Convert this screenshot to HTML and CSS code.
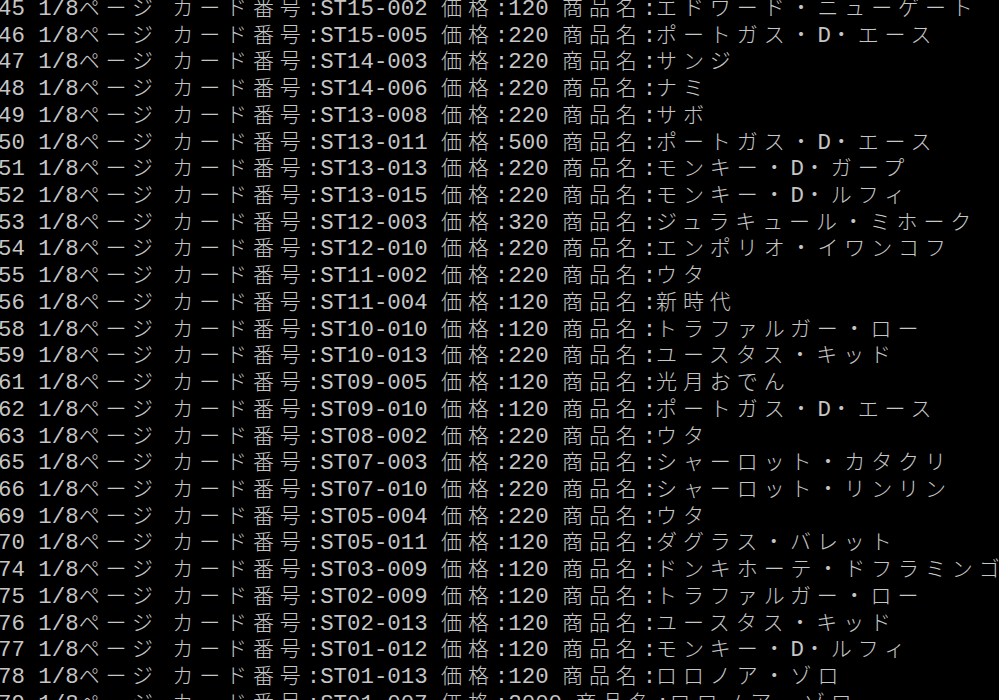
FILE: index.html
```html
<!DOCTYPE html>
<html lang="ja">
<head>
<meta charset="utf-8">
<title>console</title>
<link rel="stylesheet" href="styles.css">
</head>
<body>
<div class="term">
<div class="l">45 1/8<span class="j">ページ</span> <span class="j">カード番号</span>:ST15-002 <span class="j">価格</span>:120 <span class="j">商品名</span>:<span class="j">エドワード・ニューゲート</span></div>
<div class="l">46 1/8<span class="j">ページ</span> <span class="j">カード番号</span>:ST15-005 <span class="j">価格</span>:220 <span class="j">商品名</span>:<span class="j">ポートガス・</span>D<span class="j">・エース</span></div>
<div class="l">47 1/8<span class="j">ページ</span> <span class="j">カード番号</span>:ST14-003 <span class="j">価格</span>:220 <span class="j">商品名</span>:<span class="j">サンジ</span></div>
<div class="l">48 1/8<span class="j">ページ</span> <span class="j">カード番号</span>:ST14-006 <span class="j">価格</span>:220 <span class="j">商品名</span>:<span class="j">ナミ</span></div>
<div class="l">49 1/8<span class="j">ページ</span> <span class="j">カード番号</span>:ST13-008 <span class="j">価格</span>:220 <span class="j">商品名</span>:<span class="j">サボ</span></div>
<div class="l">50 1/8<span class="j">ページ</span> <span class="j">カード番号</span>:ST13-011 <span class="j">価格</span>:500 <span class="j">商品名</span>:<span class="j">ポートガス・</span>D<span class="j">・エース</span></div>
<div class="l">51 1/8<span class="j">ページ</span> <span class="j">カード番号</span>:ST13-013 <span class="j">価格</span>:220 <span class="j">商品名</span>:<span class="j">モンキー・</span>D<span class="j">・ガープ</span></div>
<div class="l">52 1/8<span class="j">ページ</span> <span class="j">カード番号</span>:ST13-015 <span class="j">価格</span>:220 <span class="j">商品名</span>:<span class="j">モンキー・</span>D<span class="j">・ルフィ</span></div>
<div class="l">53 1/8<span class="j">ページ</span> <span class="j">カード番号</span>:ST12-003 <span class="j">価格</span>:320 <span class="j">商品名</span>:<span class="j">ジュラキュール・ミホーク</span></div>
<div class="l">54 1/8<span class="j">ページ</span> <span class="j">カード番号</span>:ST12-010 <span class="j">価格</span>:220 <span class="j">商品名</span>:<span class="j">エンポリオ・イワンコフ</span></div>
<div class="l">55 1/8<span class="j">ページ</span> <span class="j">カード番号</span>:ST11-002 <span class="j">価格</span>:220 <span class="j">商品名</span>:<span class="j">ウタ</span></div>
<div class="l">56 1/8<span class="j">ページ</span> <span class="j">カード番号</span>:ST11-004 <span class="j">価格</span>:120 <span class="j">商品名</span>:<span class="j">新時代</span></div>
<div class="l">58 1/8<span class="j">ページ</span> <span class="j">カード番号</span>:ST10-010 <span class="j">価格</span>:120 <span class="j">商品名</span>:<span class="j">トラファルガー・ロー</span></div>
<div class="l">59 1/8<span class="j">ページ</span> <span class="j">カード番号</span>:ST10-013 <span class="j">価格</span>:220 <span class="j">商品名</span>:<span class="j">ユースタス・キッド</span></div>
<div class="l">61 1/8<span class="j">ページ</span> <span class="j">カード番号</span>:ST09-005 <span class="j">価格</span>:120 <span class="j">商品名</span>:<span class="j">光月おでん</span></div>
<div class="l">62 1/8<span class="j">ページ</span> <span class="j">カード番号</span>:ST09-010 <span class="j">価格</span>:120 <span class="j">商品名</span>:<span class="j">ポートガス・</span>D<span class="j">・エース</span></div>
<div class="l">63 1/8<span class="j">ページ</span> <span class="j">カード番号</span>:ST08-002 <span class="j">価格</span>:220 <span class="j">商品名</span>:<span class="j">ウタ</span></div>
<div class="l">65 1/8<span class="j">ページ</span> <span class="j">カード番号</span>:ST07-003 <span class="j">価格</span>:220 <span class="j">商品名</span>:<span class="j">シャーロット・カタクリ</span></div>
<div class="l">66 1/8<span class="j">ページ</span> <span class="j">カード番号</span>:ST07-010 <span class="j">価格</span>:220 <span class="j">商品名</span>:<span class="j">シャーロット・リンリン</span></div>
<div class="l">69 1/8<span class="j">ページ</span> <span class="j">カード番号</span>:ST05-004 <span class="j">価格</span>:220 <span class="j">商品名</span>:<span class="j">ウタ</span></div>
<div class="l">70 1/8<span class="j">ページ</span> <span class="j">カード番号</span>:ST05-011 <span class="j">価格</span>:120 <span class="j">商品名</span>:<span class="j">ダグラス・バレット</span></div>
<div class="l">74 1/8<span class="j">ページ</span> <span class="j">カード番号</span>:ST03-009 <span class="j">価格</span>:120 <span class="j">商品名</span>:<span class="j">ドンキホーテ・ドフラミンゴ</span></div>
<div class="l">75 1/8<span class="j">ページ</span> <span class="j">カード番号</span>:ST02-009 <span class="j">価格</span>:120 <span class="j">商品名</span>:<span class="j">トラファルガー・ロー</span></div>
<div class="l">76 1/8<span class="j">ページ</span> <span class="j">カード番号</span>:ST02-013 <span class="j">価格</span>:120 <span class="j">商品名</span>:<span class="j">ユースタス・キッド</span></div>
<div class="l">77 1/8<span class="j">ページ</span> <span class="j">カード番号</span>:ST01-012 <span class="j">価格</span>:120 <span class="j">商品名</span>:<span class="j">モンキー・</span>D<span class="j">・ルフィ</span></div>
<div class="l">78 1/8<span class="j">ページ</span> <span class="j">カード番号</span>:ST01-013 <span class="j">価格</span>:120 <span class="j">商品名</span>:<span class="j">ロロノア・ゾロ</span></div>
<div class="l">79 1/8<span class="j">ページ</span> <span class="j">カード番号</span>:ST01-007 <span class="j">価格</span>:2000 <span class="j">商品名</span>:<span class="j">ロロノア・ゾロ</span></div>
</div>
</body>
</html>
```

FILE: styles.css
```css
html, body {
  margin: 0;
  padding: 0;
  background: #000;
  height: 100%;
  overflow: hidden;
}

.term {
  margin: -7px 0 0 -2px;
  color: #c6c6c6;
  font-family: "Liberation Mono", "Noto Sans CJK JP", monospace;
  font-size: 22.4px;
  line-height: 26.72px;
}

.l {
  height: 26.72px;
  white-space: pre;
}

.j {
  font-family: "Noto Sans CJK JP", "Noto Sans CJK SC", sans-serif;
  font-size: 21px;
  font-weight: 300;
  letter-spacing: 5.88px;
  line-height: 26.72px;
}
```
